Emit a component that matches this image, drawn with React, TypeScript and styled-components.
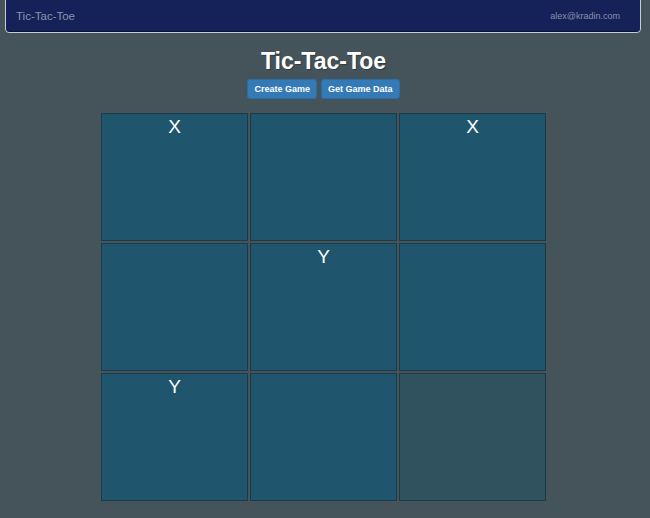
import React from "react";
import styled, { createGlobalStyle } from "styled-components";

const Global = createGlobalStyle`
  html, body { margin: 0; padding: 0; background: #44545a; }
  body { font-family: "Liberation Sans", Arial, sans-serif; }
`;

const Page = styled.div`
  min-height: 518px;
  padding-right: 3px;
  box-sizing: border-box;
`;

const Navbar = styled.nav`
  margin: -1px 6px 0 5px;
  height: 34px;
  box-sizing: border-box;
  background: #15225a;
  border: 1px solid #c9cdd2;
  border-radius: 0 0 4px 4px;
  box-shadow: inset 0 -1px 0 #0b1238;
  display: flex;
  align-items: center;
  justify-content: space-between;
  padding: 0 20px 0 10px;
`;

const Brand = styled.span`
  font-size: 11.5px;
  color: #8c91aa;
`;

const Email = styled.span`
  font-size: 9px;
  color: #8a8fa6;
`;

const Title = styled.h1`
  margin: 15px 0 0;
  text-align: center;
  font-size: 23px;
  line-height: 26px;
  font-weight: bold;
  color: #ffffff;
  text-shadow: 1px 1px 1px rgba(0, 0, 0, 0.3);
`;

const Actions = styled.div`
  display: flex;
  justify-content: center;
  gap: 4px;
  margin-top: 5px;
`;

const Button = styled.button`
  height: 20px;
  padding: 0 6px;
  border: 1px solid #2e6da4;
  border-radius: 3px;
  background: #337ab7;
  color: #ffffff;
  font-family: "Liberation Sans", Arial, sans-serif;
  font-weight: bold;
  font-size: 9px;
  cursor: pointer;
`;

const Board = styled.div`
  display: grid;
  grid-template-columns: repeat(3, 147px);
  grid-auto-rows: 128px;
  column-gap: 2px;
  row-gap: 2px;
  justify-content: center;
  margin-top: 14px;
`;

const Cell = styled.div<{ $empty?: boolean }>`
  box-sizing: border-box;
  border: 1px solid #1c3a47;
  background: ${(p) => (p.$empty ? "#30525f" : "#1f566e")};
  color: #ffffff;
  text-align: center;
  font-size: 19px;
  line-height: 22px;
  padding-top: 2px;
`;

const cells: { v: string; empty?: boolean }[] = [
  { v: "X" },
  { v: "" },
  { v: "X" },
  { v: "" },
  { v: "Y" },
  { v: "" },
  { v: "Y" },
  { v: "" },
  { v: "", empty: true },
];

export default function App() {
  return (
    <>
      <Global />
      <Page>
        <Navbar>
          <Brand>Tic-Tac-Toe</Brand>
          <Email>alex@kradin.com</Email>
        </Navbar>
        <Title>Tic-Tac-Toe</Title>
        <Actions>
          <Button>Create Game</Button>
          <Button>Get Game Data</Button>
        </Actions>
        <Board>
          {cells.map((c, i) => (
            <Cell key={i} $empty={c.empty}>
              {c.v}
            </Cell>
          ))}
        </Board>
      </Page>
    </>
  );
}
